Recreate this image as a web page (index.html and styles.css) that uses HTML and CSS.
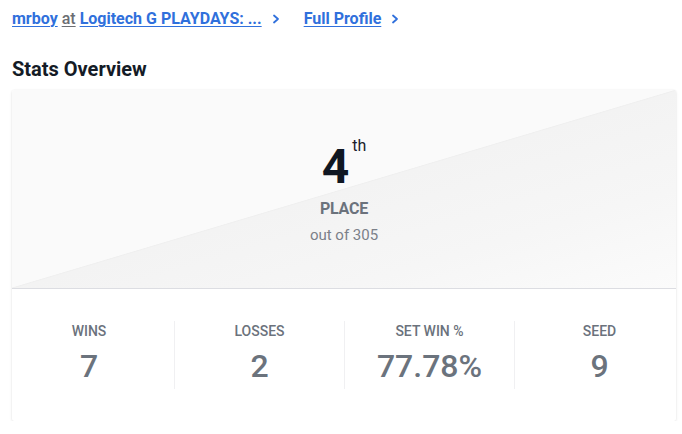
FILE: index.html
```html
<!DOCTYPE html>
<html lang="en">
<head>
<meta charset="utf-8">
<title>Stats Overview</title>
<link rel="stylesheet" href="styles.css">
</head>
<body>
<div class="page">
  <nav class="crumbs">
    <a class="crumb" href="#"><span class="link">mrboy</span> <span class="at">at</span> <span class="link">Logitech G PLAYDAYS: ...</span><svg class="chev" width="8" height="10" viewBox="0 0 8 10"><polyline points="2,1.5 6,5 2,8.5" fill="none" stroke="currentColor" stroke-width="1.8" stroke-linecap="round" stroke-linejoin="round"/></svg></a>
    <a class="crumb" href="#"><span class="link">Full Profile</span><svg class="chev" width="8" height="10" viewBox="0 0 8 10"><polyline points="2,1.5 6,5 2,8.5" fill="none" stroke="currentColor" stroke-width="1.8" stroke-linecap="round" stroke-linejoin="round"/></svg></a>
  </nav>
  <h2 class="title">Stats Overview</h2>
  <section class="card">
    <div class="placement">
      <div class="rank"><span class="rank-num">4</span><span class="rank-suffix">th</span></div>
      <div class="place-label">PLACE</div>
      <div class="place-sub">out of 305</div>
    </div>
    <div class="stats">
      <div class="stat"><div class="stat-label">WINS</div><div class="stat-value">7</div></div>
      <div class="stat"><div class="stat-label">LOSSES</div><div class="stat-value">2</div></div>
      <div class="stat"><div class="stat-label">SET WIN %</div><div class="stat-value">77.78%</div></div>
      <div class="stat"><div class="stat-label">SEED</div><div class="stat-value">9</div></div>
    </div>
  </section>
</div>
</body>
</html>
```
FILE: styles.css
```css
* { box-sizing: border-box; }
html, body { margin: 0; padding: 0; background: #ffffff; }
body { font-family: Roboto, "Noto Sans", "Liberation Sans", sans-serif; color: #1a202c; }
.page { padding: 8px 6px 0 12px; }
.crumbs { display: flex; align-items: center; gap: 24px; height: 20px; margin-top: 1px; }
.crumb { display: flex; align-items: center; font-size: 16px; line-height: 20px; font-weight: 700; color: #3070dc; text-decoration: none; white-space: nowrap; }
.crumb .link { text-decoration: underline; text-underline-offset: 2px; text-decoration-thickness: 1px; }
.crumb .at { color: #6b6e73; font-weight: 500; text-decoration: underline; text-underline-offset: 2px; margin: 0 4px; }
.chev { margin-left: 10px; color: #3070dc; }
.title { margin: 28px 0 0; font-size: 20px; line-height: 24px; font-weight: 700; color: #141b26; }
.card { margin-top: 9px; width: 664px; background: #fff; border-radius: 2px; box-shadow: 0 1px 3px rgba(0,0,0,0.10), 0 0 2px rgba(0,0,0,0.05); overflow: hidden; }
.placement { display: flex; flex-direction: column; align-items: center; padding: 53px 0 43px; border-bottom: 1px solid #dcdde2;
  background: linear-gradient(to bottom right, #fafafa 0%, #fafafa 49.8%, #efefef 50%, #f3f3f3 50.3%, #f6f6f6 75%, #fbfbfb 100%); }
.rank { display: flex; align-items: flex-start; height: 48px; }
.rank-num { font-size: 48px; line-height: 48px; font-weight: 700; color: #0f1722; }
.rank-suffix { font-size: 16px; line-height: 16px; margin-top: -5px; margin-left: 3px; color: #1a202c; }
.place-label { margin-top: 8px; font-size: 16px; line-height: 20px; font-weight: 700; color: #6b727c; letter-spacing: -0.2px; }
.place-sub { margin-top: 6px; font-size: 15px; line-height: 20px; color: #7b8089; }
.stats { display: grid; grid-template-columns: repeat(4, 170px); margin: 0 -8px; padding: 32px 0 32px; }
.stat { display: flex; flex-direction: column; align-items: center; padding: 2px 0 4px; }
.stat + .stat { border-left: 1px solid #f0f0f2; }
.stat-label { font-size: 14px; line-height: 16px; font-weight: 500; color: #6b727c; }
.stat-value { margin-top: 8px; font-size: 32px; line-height: 38px; font-weight: 500; color: #6b737d; }
```
